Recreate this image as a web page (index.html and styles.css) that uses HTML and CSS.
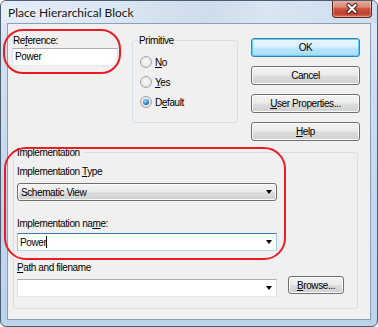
FILE: index.html
```html
<!DOCTYPE html>
<html>
<head>
<meta charset="utf-8">
<link rel="stylesheet" href="styles.css">
</head>
<body>
<div class="window">
  <div class="titlebar">
    <span class="title">Place Hierarchical Block</span>
    <div class="close">
      <svg width="14" height="11" viewBox="0 0 14 11">
        <path d="M3.5 2 L10.5 9 M10.5 2 L3.5 9" stroke="#3b1712" stroke-width="4" stroke-linecap="round"/>
        <path d="M3.5 2 L10.5 9 M10.5 2 L3.5 9" stroke="#ffffff" stroke-width="2.2" stroke-linecap="round"/>
      </svg>
    </div>
  </div>
  <div class="client">
    <div class="toprow">
      <div class="refcol">
        <div class="label">Re<u>f</u>erence:</div>
        <div class="textbox">Power</div>
      </div>
      <fieldset class="group prim">
        <legend>Primitive</legend>
        <div class="radio"><span class="rb"></span><span><u>N</u>o</span></div>
        <div class="radio"><span class="rb"></span><span><u>Y</u>es</span></div>
        <div class="radio"><span class="rb on"></span><span>D<u>e</u>fault</span></div>
      </fieldset>
      <div class="buttons">
        <div class="btn default">OK</div>
        <div class="btn">Cancel</div>
        <div class="btn"><span><u>U</u>ser Properties...</span></div>
        <div class="btn"><span><u>H</u>elp</span></div>
      </div>
    </div>
    <fieldset class="group impl">
      <legend>Implementation</legend>
      <div class="label l-type">Implementation <u>T</u>ype</div>
      <div class="combo list"><span>Schematic View</span><span class="arrow"></span></div>
      <div class="label l-name">Implementation na<u>m</u>e:</div>
      <div class="combo edit focus"><span>Power</span><span class="caret"></span><span class="arrow"></span></div>
      <div class="label l-path"><u>P</u>ath and filename</div>
      <div class="pathrow">
        <div class="combo edit path"><span></span><span class="arrow"></span></div>
        <div class="btn browse"><span><u>B</u>rowse...</span></div>
      </div>
    </fieldset>
  </div>
  <div class="annot a-ref"></div>
  <div class="annot a-impl"></div>
</div>
</body>
</html>
```
FILE: styles.css
```css
html, body {
  margin: 0;
  padding: 0;
  background: #ffffff;
}
body {
  font-family: "Liberation Sans", Arial, sans-serif;
  font-size: 10px;
  letter-spacing: -0.4px;
  color: #000;
}
u { text-decoration: underline; text-underline-offset: 1px; }

.window {
  position: relative;
  width: 378px;
  height: 327px;
  box-sizing: border-box;
  border: 1px solid #4d5d72;
  border-radius: 6px;
  background: linear-gradient(to bottom, #dde8f5 0%, #cfdff1 25%, #c2d7ef 60%, #bcd3ec 100%);
  display: flex;
  flex-direction: column;
  overflow: hidden;
}
.titlebar {
  height: 22px;
  display: flex;
  align-items: center;
  padding-left: 7px;
  background: linear-gradient(100deg, #e4edf8 0%, #dbe6f4 30%, #cfdceb 55%, #d9e5f3 70%, #cfdded 100%);
}
.title {
  font-family: Lato, "Liberation Sans", sans-serif;
  font-size: 12px;
  letter-spacing: 0;
  color: #141414;
  text-shadow: 0 0 5px rgba(255,255,255,0.95);
  margin-top: 1px;
}
.close {
  margin-left: auto;
  margin-right: 5px;
  align-self: flex-start;
  margin-top: -1px;
  width: 40px;
  height: 18px;
  box-sizing: border-box;
  border: 1px solid #5b241c;
  border-top: none;
  border-radius: 0 0 4px 4px;
  background: linear-gradient(to bottom, #eab0a2 0%, #de8a77 40%, #c9513c 52%, #c13f2d 80%, #d3735b 100%);
  box-shadow: inset 0 0 0 1px rgba(255,255,255,0.35);
  display: flex;
  align-items: center;
  justify-content: center;
}
.close svg { display: block; }

.client {
  margin: 0 6px;
  height: 297px;
  box-sizing: border-box;
  border: 1px solid #8b9fb9;
  background: #f0f0f0;
}

.toprow {
  display: flex;
  align-items: flex-start;
  height: 122px;
}
.label {
  line-height: 13px;
  height: 13px;
  white-space: nowrap;
}
.refcol {
  margin-left: 4px;
  margin-top: 10px;
  width: 106px;
}
.refcol .label { padding-left: 1px; }
.textbox {
  margin-top: 1px;
  height: 18px;
  box-sizing: border-box;
  background: #fff;
  border: 1px solid #dbdfe6;
  border-top-color: #abadb3;
  border-bottom-color: #e3e9ef;
  padding-left: 2px;
  line-height: 16px;
}

.group {
  margin: 0;
  border: 1px solid #d5dfe5;
  border-radius: 3px;
  box-sizing: border-box;
  min-width: 0;
}
.group legend {
  line-height: 13px;
  padding: 0 1px;
  margin-left: -2px;
  background: #f0f0f0;
}
.prim {
  margin-left: 14px;
  margin-top: 10px;
  width: 106px;
  height: 89px;
  padding: 5px 0 0 7px;
}
.radio {
  height: 20px;
  display: flex;
  align-items: center;
  gap: 3px;
}
.rb {
  width: 12px;
  height: 12px;
  box-sizing: border-box;
  border-radius: 50%;
  border: 1px solid #a3a6a9;
  background: radial-gradient(circle at 50% 45%, #f9f9f9 0%, #eeeeee 45%, #dcdcdc 80%, #d0d0d0 100%);
  display: flex;
  align-items: center;
  justify-content: center;
}
.rb.on::after {
  content: "";
  width: 6px;
  height: 6px;
  border-radius: 50%;
  background: radial-gradient(circle at 40% 35%, #bfe6ff 0%, #3f9de6 40%, #125ca8 75%, #0a3a70 100%);
}

.buttons {
  margin-left: 13px;
  margin-top: 14px;
  width: 109px;
  display: flex;
  flex-direction: column;
  gap: 9px;
}
.btn {
  height: 19px;
  box-sizing: border-box;
  border: 1px solid #707070;
  border-radius: 3px;
  background: linear-gradient(to bottom, #f3f3f3 0%, #ebebeb 48%, #dddddd 52%, #cfcfcf 100%);
  box-shadow: inset 0 0 0 1px #fbfbfb;
  display: flex;
  align-items: center;
  justify-content: center;
  line-height: 13px;
}
.btn.default {
  border-color: #3c7fb1;
  background: linear-gradient(to bottom, #eaf6fd 0%, #d9f0fc 48%, #bee6fd 52%, #a7d9f5 100%);
  box-shadow: inset 0 0 0 1px #5fd0f7;
}

.impl {
  margin-left: 5px;
  width: 345px;
  height: 163px;
  padding: 6px 0 0 3px;
}
.impl legend {
  padding: 0 3px;
  margin-left: -3px;
}
.combo {
  width: 260px;
  height: 18px;
  box-sizing: border-box;
  display: flex;
  align-items: center;
  line-height: 13px;
  position: relative;
}
.combo.list {
  margin-top: 5px;
  border: 1px solid #707070;
  border-radius: 3px;
  background: linear-gradient(to bottom, #f3f3f3 0%, #ebebeb 48%, #dddddd 52%, #cfcfcf 100%);
  box-shadow: inset 0 0 0 1px #fbfbfb;
  padding-left: 3px;
}
.combo.edit {
  background: #fff;
  border: 1px solid #dbdfe6;
  border-top-color: #abadb3;
  border-bottom-color: #e3e9ef;
  padding-left: 2px;
}
.combo.focus {
  margin-top: 3px;
  border-color: #a4c9e3;
  border-top-color: #3d7bad;
  border-bottom-color: #b7d9ed;
}
.caret {
  width: 1px;
  height: 12px;
  background: #000;
  margin-left: 0px;
}
.arrow {
  margin-left: auto;
  margin-right: 4px;
  width: 0;
  height: 0;
  border-left: 3.5px solid transparent;
  border-right: 3.5px solid transparent;
  border-top: 4px solid #000;
}
.l-type { margin-top: 0; }
.l-name { margin-top: 16px; }
.l-path { margin-top: 10px; }
.pathrow {
  display: flex;
  align-items: flex-start;
  margin-top: 2px;
}
.combo.path { margin-top: 3px; }
.browse {
  margin-left: 11px;
  width: 56px;
  height: 18px;
}

.annot {
  position: absolute;
  border: 2px solid #ec1c24;
  box-sizing: border-box;
  pointer-events: none;
}
.a-ref {
  left: 2px;
  top: 28px;
  width: 118px;
  height: 45px;
  border-radius: 20px;
}
.a-impl {
  left: 3px;
  top: 146px;
  width: 282px;
  height: 113px;
  border-radius: 22px;
}
```
